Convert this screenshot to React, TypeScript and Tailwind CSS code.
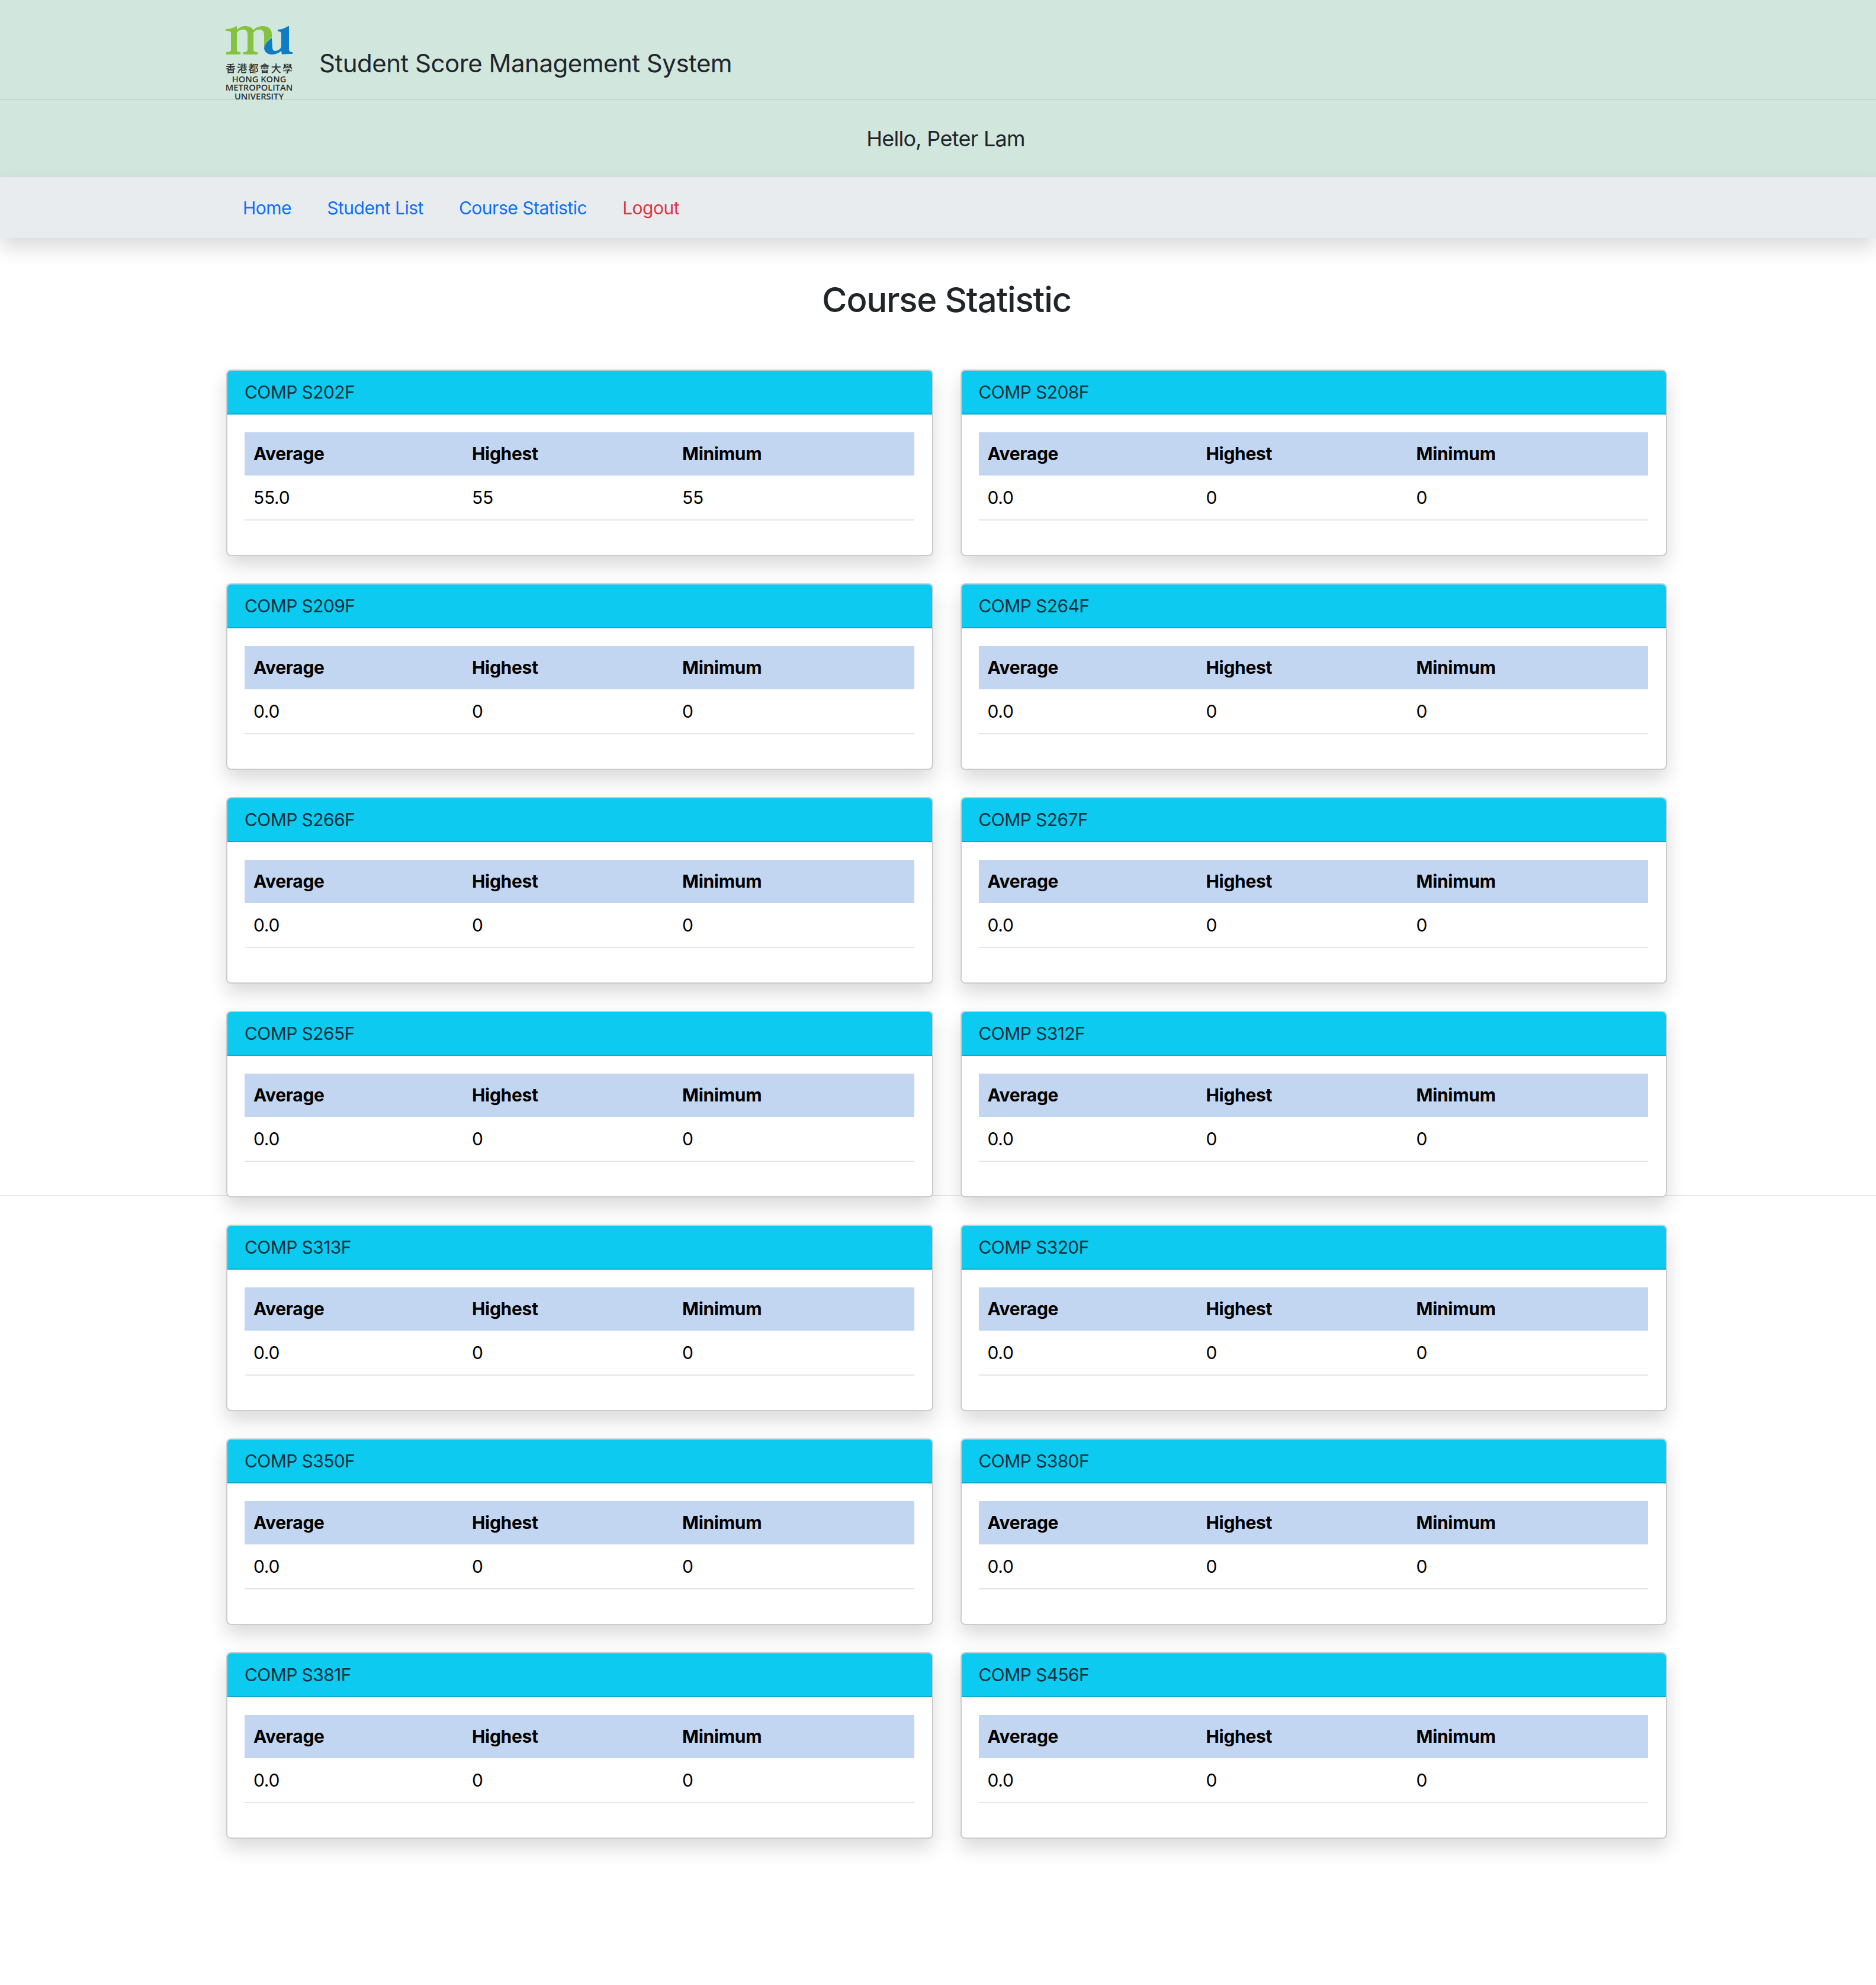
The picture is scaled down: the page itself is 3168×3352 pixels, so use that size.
import React from 'react';

const courses = [
  { code: 'COMP S202F', average: '55.0', highest: 55, minimum: 55 },
  { code: 'COMP S208F', average: '0.0', highest: 0, minimum: 0 },
  { code: 'COMP S209F', average: '0.0', highest: 0, minimum: 0 },
  { code: 'COMP S264F', average: '0.0', highest: 0, minimum: 0 },
  { code: 'COMP S266F', average: '0.0', highest: 0, minimum: 0 },
  { code: 'COMP S267F', average: '0.0', highest: 0, minimum: 0 },
  { code: 'COMP S265F', average: '0.0', highest: 0, minimum: 0 },
  { code: 'COMP S312F', average: '0.0', highest: 0, minimum: 0 },
  { code: 'COMP S313F', average: '0.0', highest: 0, minimum: 0 },
  { code: 'COMP S320F', average: '0.0', highest: 0, minimum: 0 },
  { code: 'COMP S350F', average: '0.0', highest: 0, minimum: 0 },
  { code: 'COMP S380F', average: '0.0', highest: 0, minimum: 0 },
  { code: 'COMP S381F', average: '0.0', highest: 0, minimum: 0 },
  { code: 'COMP S456F', average: '0.0', highest: 0, minimum: 0 },
];

const Logo = () => (
  <div className="flex w-[113px] flex-col items-center text-[#2a2f2e]">
    <svg viewBox="0 0 113 48" className="h-[48px] w-[113px]">
      <path
        fill="#84c341"
        d="M0 5 C7 5 13 3 19 0 L19 7 C23 2 28 0 33 0 C39 0 44 2 47 7 C51 2 57 0 63 0 C72 0 78 5 78 14 L78 19 C72 23 66 30 65 38 L65 14 C65 9 62 6 58 6 C53 6 48 8 47 12 L47 40 C47 43 50 44 54 44 L54 48 L30 48 L30 44 C34 44 37 43 37 40 L37 14 C37 9 34 6 30 6 C25 6 20 8 19 12 L19 40 C19 43 21 44 25 44 L25 48 L1 48 L1 44 C5 44 9 43 9 40 L9 12 C9 9 6 8 0 8 Z"
      />
      <path
        fill="#0f7cc4"
        d="M88 6 C94 6 101 3 106 0 L107 0 L107 39 C107 43 109 44 113 44 L113 47 C107 47 100 47 95 48 L94 42 C89 46 84 48 78 48 C71 48 66 44 65 38 C66 30 72 24 78 20 L79 36 C79 40 81 42 84 42 C88 42 94 38 94 34 L94 13 C94 10 92 9 88 9 Z"
      />
    </svg>
    <div className="mt-[14px] flex w-full justify-between font-['Noto_Sans_CJK_TC',sans-serif] text-[17px] leading-[17px] font-medium">
      <span>香</span>
      <span>港</span>
      <span>都</span>
      <span>會</span>
      <span>大</span>
      <span>學</span>
    </div>
    <div className="mt-[3px] text-center font-['Open_Sans',sans-serif] text-[14.7px] leading-[14.5px] font-semibold whitespace-nowrap">
      <div>HONG KONG</div>
      <div>METROPOLITAN</div>
      <div>UNIVERSITY</div>
    </div>
  </div>
);

const CourseCard = ({ course }: { course: (typeof courses)[number] }) => (
  <div className="h-[315px] overflow-hidden rounded-[8px] border-2 border-black/20 bg-white shadow-[0_16px_32px_rgba(0,0,0,0.15)]">
    <div className="flex h-[74px] items-center border-b-2 border-black/15 bg-[#0dcaf0] px-[29px] tracking-[-0.02em] text-[#06303c]">
      {course.code}
    </div>
    <div className="pt-[30px] pr-[30px] pl-[29px]">
      <table className="w-full table-fixed border-collapse tracking-[-0.01em] text-black">
        <thead>
          <tr className="h-[73px] bg-[#c3d6f1] text-left font-bold">
            <th className="w-[369px] pb-[2px] pl-[15px]">Average</th>
            <th className="w-[355px] pb-[2px] pl-[15px]">Highest</th>
            <th className="pb-[2px] pl-[15px]">Minimum</th>
          </tr>
        </thead>
        <tbody>
          <tr className="h-[75px] border-b-2 border-[#e3e5e8]">
            <td className="pl-[15px]">{course.average}</td>
            <td className="pl-[15px]">{course.highest}</td>
            <td className="pl-[15px]">{course.minimum}</td>
          </tr>
        </tbody>
      </table>
    </div>
  </div>
);

export default function App() {
  return (
    <div className="relative min-h-[3352px] bg-white font-['Inter',sans-serif] text-[30px] leading-[42px] text-[#212529]">
      {/* stray page-height rule, the cards sit over it */}
      <div className="absolute top-[2018px] right-0 left-0 h-[2px] bg-[#e6e8ea]" />

      <header className="bg-[#d1e7dd]">
        <div className="flex h-[169px] items-center gap-[45px] border-b-2 border-[#c3dbd0] pt-[46px] pl-[381px]">
          <Logo />
          <div className="text-[42px] tracking-[-0.012em] text-[#212529]">Student Score Management System</div>
        </div>
        <div className="flex h-[130px] items-center pl-[381px]">
          <div className="w-[2432px] text-center text-[36px] tracking-[-0.02em]">Hello, Peter Lam</div>
        </div>
      </header>

      <nav className="relative flex h-[103px] items-center bg-[#e9ecef] pl-[380px] tracking-[-0.016em] shadow-[0_16px_32px_rgba(0,0,0,0.15)]">
        <a className="px-[30px] text-[#0d6efd]">Home</a>
        <a className="px-[30px] text-[#0d6efd]">Student List</a>
        <a className="px-[30px] text-[#0d6efd]">Course Statistic</a>
        <a className="px-[30px] text-[#dc3545]">Logout</a>
      </nav>

      <main className="relative ml-[382px] w-[2433px]">
        <h2 className="flex h-[222px] items-center justify-center pb-[14px] text-[58px] font-medium tracking-[-0.02em]">
          Course Statistic
        </h2>
        <div className="grid grid-cols-2 gap-x-[46px] gap-y-[46px]">
          {courses.map(course => (
            <CourseCard key={course.code} course={course} />
          ))}
        </div>
      </main>
    </div>
  );
}
